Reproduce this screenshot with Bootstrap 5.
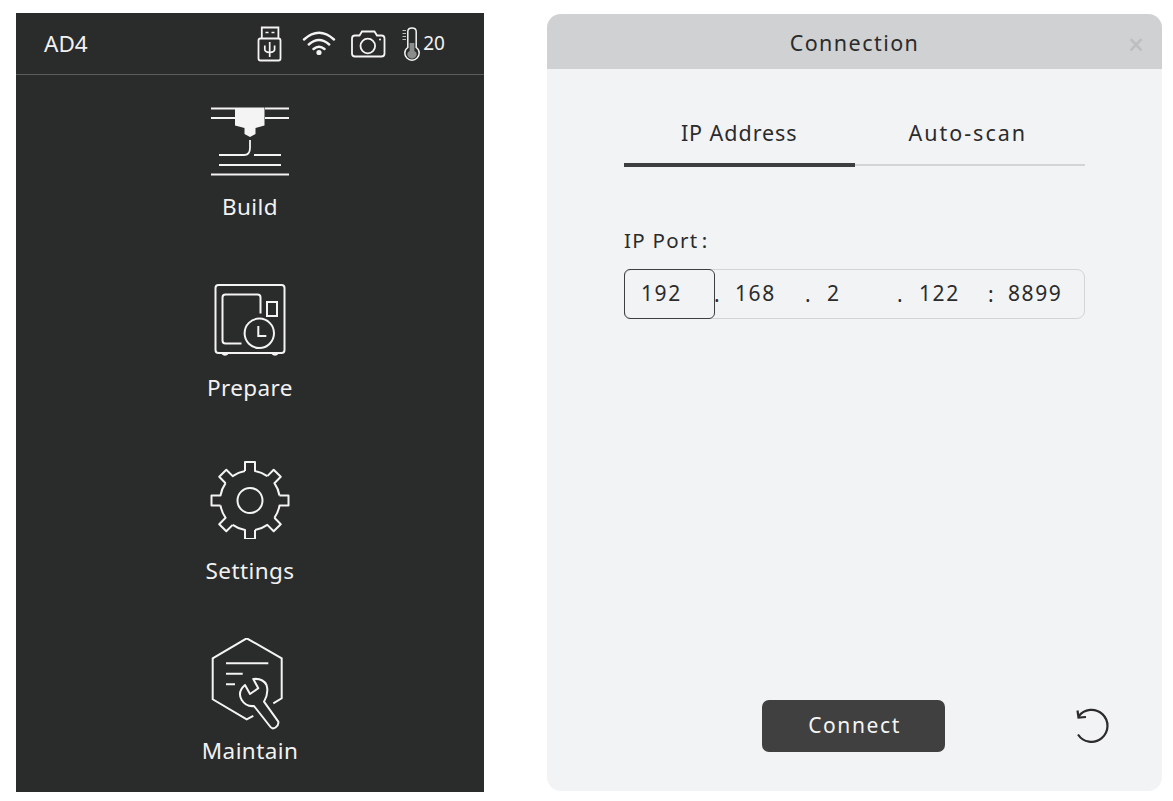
<!DOCTYPE html>
<html lang="en">
<head>
    <meta charset="UTF-8">
    <title>AD4 Connection</title>
    <link href="https://cdn.jsdelivr.net/npm/bootstrap@5.3.2/dist/css/bootstrap.min.css" rel="stylesheet">
    <style>
        body {
            background: #fff;
            font-family: "Noto Sans", "Liberation Sans", sans-serif;
        }
        .page-wrap {
            padding: 13px 11px 0 16px;
            gap: 63px;
        }
        .screen-panel {
            width: 468px;
            height: 779px;
            background: #2a2b2b;
            color: #f2f2f2;
        }
        .status-bar {
            height: 62px;
            padding: 0 39px 0 28px;
            border-bottom: 1px solid #5a5b5b;
            font-size: 22.5px;
        }
        .status-temp {
            font-size: 19px;
            margin-left: 2px;
        }
        .icon-wifi {
            margin-left: 19px;
        }
        .icon-camera,
        .icon-thermo {
            margin-left: 15px;
        }
        .menu-list {
            padding-top: 32px;
        }
        .menu-item {
            height: 177px;
            letter-spacing: .4px;
            font-size: 22.5px;
            line-height: 30px;
        }
        .menu-item svg {
            display: block;
            fill: none;
            stroke: #f4f4f4;
            stroke-width: 2;
        }
        .label-build {
            margin-top: 15px;
        }
        .label-prepare,
        .label-settings {
            margin-top: 17px;
        }
        .label-maintain {
            margin-top: 5px;
        }
        .conn-panel {
            width: 615px;
            height: 777px;
            margin-top: 1px;
            background: #f2f3f5;
            border: 0;
            border-radius: 14px;
            overflow: hidden;
            color: #2b2b2b;
        }
        .conn-head {
            height: 55px;
            padding-top: 3px;
            background: #cfd1d3;
            font-size: 21.5px;
            letter-spacing: 1.45px;
        }
        .conn-x {
            right: 18px;
            top: 9px;
            font-size: 28px;
            font-weight: 500;
            letter-spacing: 0;
            color: #bcbec0;
        }
        .conn-body {
            padding: 0 77px;
        }
        .tab-row {
            margin-top: 45px;
            font-size: 21.5px;
        }
        .tab-cell {
            height: 52px;
            padding-top: 3px;
            letter-spacing: 2px;
            padding-right: 4px;
            border-bottom: 2px solid #d2d4d6;
        }
        .tab-cell.is-on {
            height: 53px;
            letter-spacing: .95px;
            padding-right: 0;
            border-bottom: 4px solid #3d3e3f;
        }
        .port-label {
            margin-top: 59px;
            height: 43px;
            font-size: 20.5px;
            letter-spacing: 1.3px;
            line-height: 28px;
        }
        .ip-box {
            height: 50px;
            width: 461px;
            border: 1px solid #d2d4d6;
            border-radius: 8px;
            font-size: 21px;
            letter-spacing: 1.6px;
        }
        .ip-seg {
            width: 90px;
            height: 50px;
            margin: -1px 0;
            padding-left: 17px;
            border: 1px solid transparent;
            border-radius: 6px;
        }
        .ip-seg.is-on {
            width: 91px;
            margin-left: -1px;
            padding-left: 16px;
            border-color: #3d3e3f;
        }
        .ip-seg.is-last {
            padding-left: 14px;
        }
        .ip-sep {
            width: 2px;
            height: 48px;
            line-height: 48px;
            white-space: nowrap;
            text-indent: -2px;
        }
        .ip-sep.is-first {
            text-indent: -1px;
        }
        .ip-sep.is-colon {
            text-indent: -3px;
        }
        .conn-foot {
            margin-top: auto;
            height: 91px;
        }
        .btn-connect {
            width: 183px;
            height: 52px;
            margin-left: 138px;
            padding: 0 0 0 2px;
            background: #404040;
            border: 0;
            border-radius: 7px;
            color: #f5f5f5;
            font-size: 21px;
            letter-spacing: 1.6px;
        }
        .btn-connect:hover {
            background: #404040;
            color: #f5f5f5;
        }
        .reset-icon {
            margin-left: 129px;
        }
    </style>
</head>
<body>
    <div class="d-flex align-items-start page-wrap">
        <div class="screen-panel flex-shrink-0">
            <div class="status-bar d-flex align-items-center">
                <span>AD4</span>
                <div class="d-flex align-items-center ms-auto">
                    <!-- usb -->
                    <svg width="26" height="36" viewBox="258 26 26 36" fill="none" stroke="#f4f4f4" stroke-width="1.8">
                        <rect x="259.5" y="38.5" width="22" height="22" rx="2"/>
                        <path d="M262.8 38.5V27.5h16.6v11"/>
                        <path d="M266.5 32.5h3M272.5 32.5h3" stroke-width="1.6"/>
                        <path d="M270.7 42v15M265.8 45.5v4q0 2.5 4.9 3q4.9-.5 4.9-3v-4" stroke-width="1.7"/>
                    </svg>
                    <!-- wifi -->
                    <svg class="icon-wifi" width="34" height="28" viewBox="302 32 34 28" fill="none" stroke="#f4f4f4" stroke-width="2.4" stroke-linecap="round">
                        <path d="M304 41.500q15-13.500 30 0M308.800 46.500q10.200-9 20.400 0M313.500 51q5.500-4.500 11 0"/>
                        <circle cx="319" cy="54.500" r="2.600" fill="#f4f4f4" stroke="none"/>
                    </svg>
                    <!-- camera -->
                    <svg class="icon-camera" width="35" height="28" viewBox="350.500 30 35 28" fill="none" stroke="#f4f4f4" stroke-width="1.800">
                        <path d="M354.500 35.500h4.500l2.500-4h12.500l2.500 4h4.500q3 0 3 3v15q0 3-3 3h-26.500q-3 0-3-3v-15q0-3 3-3z"/>
                        <circle cx="367.300" cy="46" r="7.300"/>
                        <circle cx="379.500" cy="39.500" r="1" fill="#f4f4f4" stroke="none"/>
                    </svg>
                    <!-- thermometer -->
                    <svg class="icon-thermo" width="20" height="36" viewBox="400 26 20 36" fill="none" stroke="#f4f4f4" stroke-width="1.500">
                        <path d="M406.800 47.500V31.500q0-3.500 4.200-3.500t4.200 3.500v16q3 2 3 5.500a7.200 7.200 0 0 1-14.400 0q0-3.500 3-5.500z"/>
                        <path d="M408.600 43h4.800v8q2.300 .8 2.300 3a4.700 4.700 0 0 1-9.400 0q0-2.200 2.300-3z" fill="#8a8b8b" stroke="none"/>
                        <path d="M401.500 30.500h3.500M401.500 33.500h3.500M401.500 36.500h3.500M401.500 39.500h3.500" stroke="#bbb" stroke-width="1.200"/>
                    </svg>
                    <span class="status-temp">20</span>
                </div>
            </div>
            <div class="menu-list d-flex flex-column align-items-center">
                <div class="menu-item d-flex flex-column align-items-center">
                    <svg width="78" height="70" viewBox="211 107 78 70">
                        <path d="M211 108.500h24M265 108.500h24M211 118h24M265 118h24"/>
                        <path d="M235 107.500h29.500v18l-9 2.500v6l-5.500 3l-5.500-3v-6l-9.500-2.500z" fill="#f4f4f4" stroke="none"/>
                        <path d="M250 140v8q0 7-6 7h-25M254 155h27M219 165h62M211 174.500h78" stroke-width="1.800"/>
                    </svg>
                    <div class="label-build">Build</div>
                </div>
                <div class="menu-item d-flex flex-column align-items-center">
                    <svg width="72" height="72" viewBox="214 284 72 72">
                        <rect x="215.500" y="285" width="69" height="68" rx="3"/>
                        <path d="M222 353q3 3.500 6 0M272 353q3 3.500 6 0"/>
                        <path d="M260.500 313.500v-16q0-3-3-3h-32q-3 0-3 3v43q0 3 3 3h16"/>
                        <rect x="267" y="302" width="10" height="14"/>
                        <circle cx="259.300" cy="333.300" r="14.700"/>
                        <path d="M258.300 326v10h8"/>
                    </svg>
                    <div class="label-prepare">Prepare</div>
                </div>
                <div class="menu-item d-flex flex-column align-items-center">
                    <svg width="80" height="78" viewBox="-40 -39.500 80 78" stroke-linejoin="round">
                        <defs>
                            <path id="gearTooth" d="M-5-29.500V-38.500H5V-29.500A30 30 0 0 1 17.300-24.400"/>
                        </defs>
                        <use href="#gearTooth"/>
                        <use href="#gearTooth" transform="rotate(45)"/>
                        <use href="#gearTooth" transform="rotate(90)"/>
                        <use href="#gearTooth" transform="rotate(135)"/>
                        <use href="#gearTooth" transform="rotate(180)"/>
                        <use href="#gearTooth" transform="rotate(225)"/>
                        <use href="#gearTooth" transform="rotate(270)"/>
                        <use href="#gearTooth" transform="rotate(315)"/>
                        <circle r="12.500"/>
                    </svg>
                    <div class="label-settings">Settings</div>
                </div>
                <div class="menu-item d-flex flex-column align-items-center">
                    <svg width="78" height="93" viewBox="211 638 78 93">
                        <path d="M273.300 703.300l8.400-5V658.300l-35-20-34 20v41l34 20 6.600-3.500"/>
                        <path d="M226 663.300h42.300M226 673.700h16.700M226 684.300h9"/>
                        <path d="M245 685L250 694 258.300 688.300 253.300 679Q263 678 266.500 685 269 693 264 701.700L278.300 721.700Q279 725 275.500 727.500 272.500 729.500 270.500 727L254 706Q246 707 241.700 700 237 692 245 685Z" stroke-linejoin="round"/>
                    </svg>
                    <div class="label-maintain">Maintain</div>
                </div>
            </div>
        </div>

        <div class="card conn-panel flex-shrink-0">
            <div class="conn-head position-relative d-flex align-items-center justify-content-center">
                Connection
                <span class="conn-x position-absolute">&times;</span>
            </div>
            <div class="conn-body d-flex flex-column flex-grow-1">
                <div class="tab-row d-flex align-items-start">
                    <div class="tab-cell is-on w-50 d-flex justify-content-center align-items-start">IP Address</div>
                    <div class="tab-cell w-50 d-flex justify-content-center align-items-start">Auto-scan</div>
                </div>
                <div class="port-label">IP Port&#8202;:</div>
                <div class="ip-box d-flex">
                    <div class="ip-seg is-on d-flex align-items-center">192</div>
                    <div class="ip-sep is-first">.</div>
                    <div class="ip-seg d-flex align-items-center">168</div>
                    <div class="ip-sep">.</div>
                    <div class="ip-seg d-flex align-items-center">2</div>
                    <div class="ip-sep">.</div>
                    <div class="ip-seg d-flex align-items-center">122</div>
                    <div class="ip-sep is-colon">:</div>
                    <div class="ip-seg is-last d-flex align-items-center">8899</div>
                </div>
                <div class="conn-foot d-flex align-items-start">
                    <button class="btn btn-connect flex-shrink-0" type="button">Connect</button>
                    <svg class="reset-icon flex-shrink-0 mt-2" width="36" height="36" viewBox="0 0 36 36" fill="none" stroke="#2b2b2b" stroke-width="2.200">
                        <path d="M4.500 8.500a16 16 0 1 1-.5 18"/>
                        <path d="M3.500 2.500l1 7 7.500-.5" stroke-linejoin="miter"/>
                    </svg>
                </div>
            </div>
        </div>
    </div>

    <script src="https://cdn.jsdelivr.net/npm/bootstrap@5.3.2/dist/js/bootstrap.bundle.min.js"></script>
</body>
</html>
